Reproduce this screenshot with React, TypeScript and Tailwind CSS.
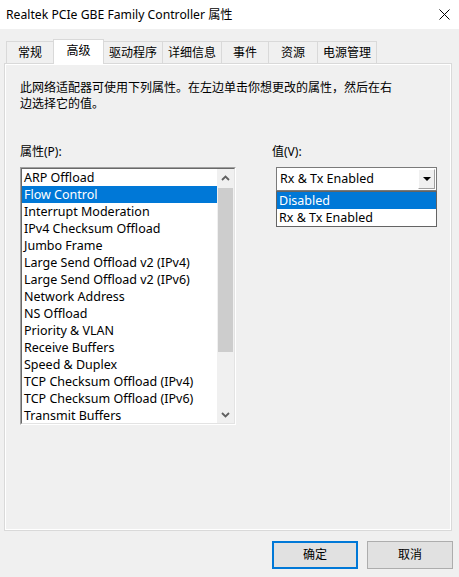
import React from "react";

const items = [
  "ARP Offload",
  "Flow Control",
  "Interrupt Moderation",
  "IPv4 Checksum Offload",
  "Jumbo Frame",
  "Large Send Offload v2 (IPv4)",
  "Large Send Offload v2 (IPv6)",
  "Network Address",
  "NS Offload",
  "Priority & VLAN",
  "Receive Buffers",
  "Speed & Duplex",
  "TCP Checksum Offload (IPv4)",
  "TCP Checksum Offload (IPv6)",
  "Transmit Buffers",
];

const tabs = [
  { label: "常规", w: "w-[48px]" },
  { label: "高级", w: "w-[51px]", active: true },
  { label: "驱动程序", w: "w-[60px]" },
  { label: "详细信息", w: "w-[60px]" },
  { label: "事件", w: "w-[48px]" },
  { label: "资源", w: "w-[50px]" },
  { label: "电源管理", w: "w-[60px]" },
];

function Chevron({ up }: { up?: boolean }) {
  return (
    <svg width="9" height="6" viewBox="0 0 9 6">
      <path
        d={up ? "M1 5 L4.5 1.5 L8 5" : "M1 1 L4.5 4.5 L8 1"}
        fill="none"
        stroke="#606060"
        strokeWidth="1.8"
      />
    </svg>
  );
}

export default function App() {
  return (
    <div className="w-[459px] h-[577px] bg-[#f0f0f0] flex flex-col font-['Noto_Sans','Noto_Sans_CJK_SC',sans-serif] text-[12px] text-black overflow-hidden">
      {/* title bar */}
      <div className="h-[29px] bg-white flex items-center justify-between pl-[6px] pr-[9px] shrink-0">
        <span className="text-[12.2px] leading-[16px]">Realtek PCIe GBE Family Controller 属性</span>
        <svg width="11" height="11" viewBox="0 0 11 11">
          <path d="M0.5 0.5 L10.5 10.5 M10.5 0.5 L0.5 10.5" stroke="#000" strokeWidth="1" />
        </svg>
      </div>

      {/* tabs */}
      <div className="flex items-end h-[25px] mt-[9px] ml-[6px] shrink-0">
        {tabs.map((t, i) =>
          t.active ? (
            <div
              key={t.label}
              className={`${t.w} h-[25px] -mb-px relative z-10 bg-white border-t border-l border-r border-[#d9d9d9] flex items-center justify-center pb-[2px] -ml-px leading-[16px]`}
            >
              {t.label}
            </div>
          ) : (
            <div
              key={t.label}
              className={`${t.w} h-[22px] border-t border-l border-r border-[#d9d9d9] flex items-center justify-center leading-[16px] ${i > 0 ? "-ml-px" : ""}`}
            >
              {t.label}
            </div>
          )
        )}
      </div>

      {/* panel */}
      <div className="ml-[4px] w-[448px] h-[468px] border border-[#d9d9d9] shrink-0">
        <div className="w-full h-full border border-white bg-[#f0f0f0] pt-[15px] pl-[14px] flex flex-col">
          <p className="leading-[16px]">
            此网络适配器可使用下列属性。在左边单击你想更改的属性，然后在右
            <br />
            边选择它的值。
          </p>

          <div className="flex mt-[32px]">
            {/* left column */}
            <div className="w-[216px] flex flex-col">
              <div className="leading-[15px]">属性(P):</div>
              <div className="mt-[8px] h-[258px] border border-t-[#a0a0a0] border-l-[#a0a0a0] border-r-white border-b-white">
                <div className="h-full border border-t-[#696969] border-l-[#696969] border-r-[#e3e3e3] border-b-[#e3e3e3] bg-white flex overflow-hidden">
                  <div className="flex-1 flex flex-col">
                    {items.map((it, i) => (
                      <div
                        key={it}
                        className={`h-[17px] shrink-0 leading-[17px] pl-[2px] whitespace-nowrap text-[12.5px] ${
                          i === 1 ? "bg-[#0078d7] text-white" : ""
                        }`}
                      >
                        {it}
                      </div>
                    ))}
                  </div>
                  <div className="w-[17px] bg-[#f0f0f0] flex flex-col shrink-0">
                    <div className="h-[17px] flex items-center justify-center">
                      <Chevron up />
                    </div>
                    <div className="flex-1 flex flex-col">
                      <div className="mt-[2px] mx-[1px] h-[164px] bg-[#cdcdcd]" />
                    </div>
                    <div className="h-[17px] flex items-center justify-center">
                      <Chevron />
                    </div>
                  </div>
                </div>
              </div>
            </div>

            {/* right column */}
            <div className="ml-[36px] flex flex-col">
              <div className="leading-[15px]">值(V):</div>
              <div className="relative ml-[4px] mt-[8px] w-[161px]">
                <div className="h-[24px] border border-[#7a7a7a] bg-white flex items-center">
                  <span className="flex-1 pl-[3px] leading-[16px] whitespace-nowrap text-[12.5px]">Rx &amp; Tx Enabled</span>
                  <div className="w-[17px] h-[20px] mr-[1px] bg-[#f0f0f0] border border-t-white border-l-white border-r-[#a0a0a0] border-b-[#a0a0a0] flex items-center justify-center">
                    <svg width="8" height="4" viewBox="0 0 8 4">
                      <path d="M0 0 L8 0 L4 4 Z" fill="#000" />
                    </svg>
                  </div>
                </div>
                <div className="absolute left-0 top-[24px] w-[161px] border border-[#646464] bg-white z-20">
                  <div className="h-[17px] leading-[17px] pl-[2px] bg-[#0078d7] text-white text-[12.5px]">Disabled</div>
                  <div className="h-[17px] leading-[17px] pl-[2px] text-[12.5px]">Rx &amp; Tx Enabled</div>
                </div>
              </div>
            </div>
          </div>
        </div>
      </div>

      {/* buttons */}
      <div className="flex justify-end gap-[9px] mt-[10px] pr-[6px]">
        <button className="w-[86px] h-[28px] bg-[#e1e1e1] border-2 border-[#0078d7] leading-[16px]">确定</button>
        <button className="w-[86px] h-[28px] bg-[#e1e1e1] border border-[#adadad] leading-[16px]">取消</button>
      </div>
    </div>
  );
}
